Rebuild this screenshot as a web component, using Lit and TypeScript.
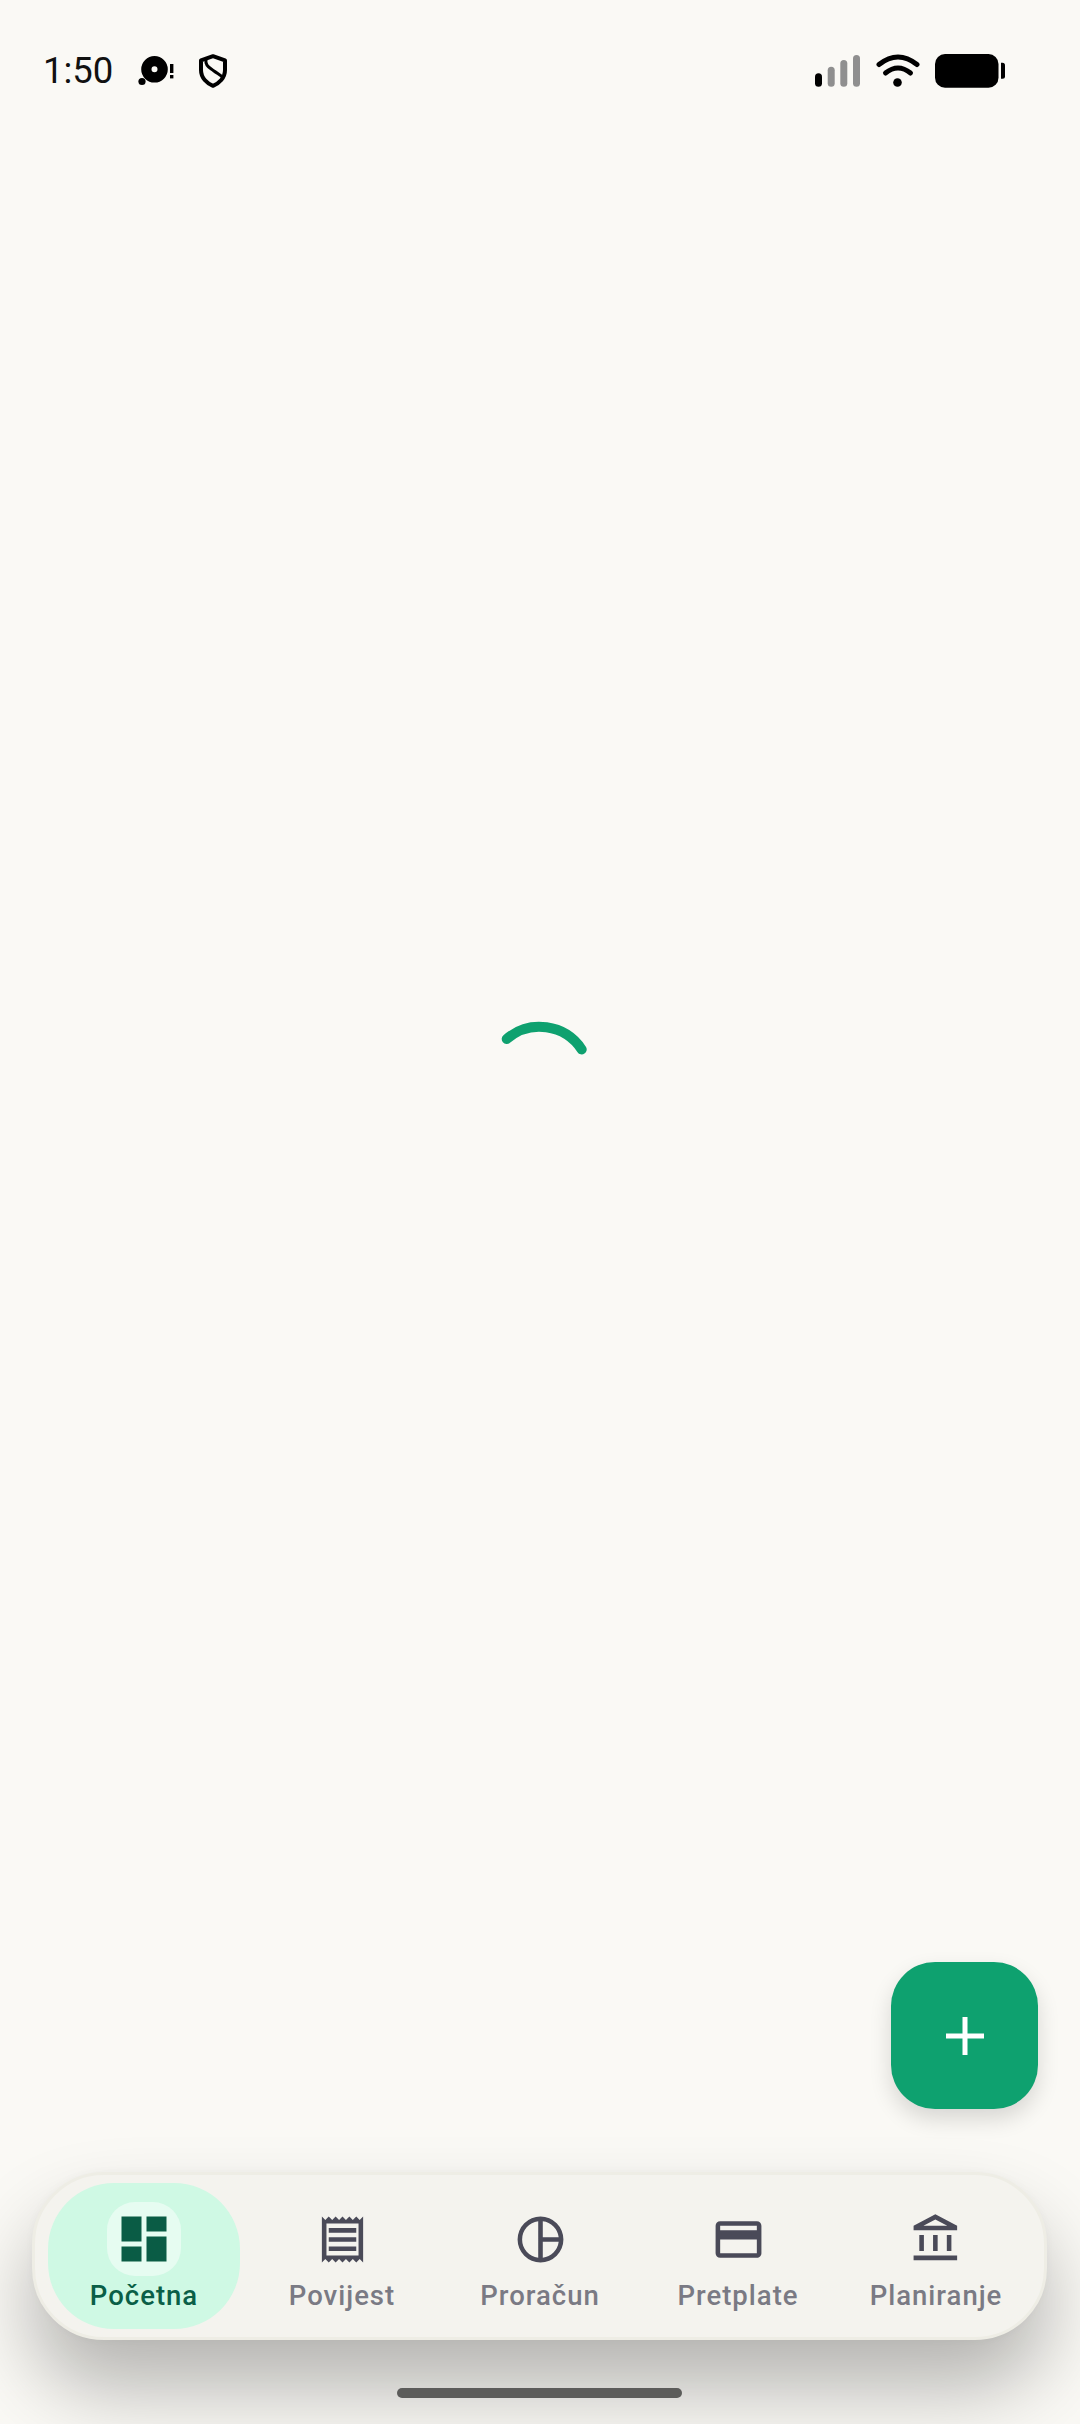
import { LitElement, html, css, svg } from 'lit';
import { customElement } from 'lit/decorators.js';
import { classMap } from 'lit/directives/class-map.js';

const tabs = [
  {
    label: 'Početna',
    active: true,
    icon: svg`<path d="M3 13h8V3H3v10zm0 8h8v-6H3v6zm10 0h8V11h-8v10zm0-18v6h8V3h-8z"/>`,
  },
  {
    label: 'Povijest',
    icon: svg`<path d="M19.5 3.5 18 2l-1.5 1.5L15 2l-1.5 1.5L12 2l-1.5 1.5L9 2 7.5 3.5 6 2 4.5 3.5 3 2v20l1.5-1.5L6 22l1.5-1.5L9 22l1.5-1.5L12 22l1.5-1.5L15 22l1.5-1.5L18 22l1.5-1.5L21 22V2l-1.5 1.5zM19 19H5V5h14v14zM6 15h12v2H6zm0-4h12v2H6zm0-4h12v2H6z"/>`,
  },
  {
    label: 'Proračun',
    icon: svg`<path d="M12 2a10 10 0 1 0 0 20 10 10 0 0 0 0-20zm-1 2.06V19.94A8 8 0 0 1 11 4.06zm2 0A8 8 0 0 1 19.94 11H13V4.06zM13 19.94V13h6.94A8 8 0 0 1 13 19.94z"/>`,
  },
  {
    label: 'Pretplate',
    icon: svg`<path d="M20 4H4c-1.11 0-1.99.89-1.99 2L2 18c0 1.11.89 2 2 2h16c1.11 0 2-.89 2-2V6c0-1.11-.89-2-2-2zm0 14H4v-6h16v6zm0-10H4V6h16v2z"/>`,
  },
  {
    label: 'Planiranje',
    icon: svg`<path d="M6.5 10h-2v7h2v-7zm6 0h-2v7h2v-7zm8.5 9H2v2h19v-2zm-2.5-9h-2v7h2v-7zm-7-6.74L16.71 6H6.29l5.21-2.74m0-2.26L2 6v2h19V6l-9.5-5z"/>`,
  },
];

@customElement('app-root')
export class AppRoot extends LitElement {
  static styles = css`
    :host {
      display: flex;
      flex-direction: column;
      position: relative;
      height: 2424px;
      overflow: hidden;
      background: #faf9f5;
      font-family: Roboto, sans-serif;
    }

    .status {
      display: flex;
      align-items: center;
      height: 140px;
      box-sizing: border-box;
      padding: 2px 75px 0 43px;
      color: #000;
    }
    .time {
      font-size: 36.5px;
      line-height: 44px;
      color: #111;
      margin-right: 24px;
    }
    .status svg {
      display: block;
      flex: none;
    }
    .disc {
      width: 40px;
      height: 34px;
      margin-right: 22px;
    }
    .shield {
      width: 28px;
      height: 34px;
    }
    .spacer {
      flex: 1;
    }
    .signal {
      width: 45px;
      height: 34px;
      margin-right: 16px;
    }
    .wifi {
      width: 44px;
      height: 34px;
      margin-right: 15px;
    }
    .battery {
      width: 70px;
      height: 34px;
    }

    main {
      flex: 1;
      display: flex;
      align-items: center;
      justify-content: center;
      padding-bottom: 160px;
    }
    .spinner {
      width: 110px;
      height: 110px;
      fill: none;
      stroke: #0ea16f;
      stroke-width: 10;
      stroke-linecap: round;
    }

    .fab {
      position: absolute;
      right: 42px;
      bottom: 315px;
      width: 147px;
      height: 147px;
      border-radius: 44px;
      background: #0ea16f;
      box-shadow: 0 10px 22px rgba(0, 0, 0, 0.14);
      display: flex;
      align-items: center;
      justify-content: center;
    }
    .fab svg {
      width: 38px;
      height: 38px;
      stroke: #fff;
      stroke-width: 5;
    }

    nav {
      display: flex;
      gap: 6px;
      box-sizing: border-box;
      height: 168px;
      margin: 0 33px 84px 32px;
      padding: 8px 12px 8px 13px;
      border: 3px solid #eeede5;
      border-radius: 72px;
      background: #f4f3ee;
      box-shadow: 0 48px 80px rgba(0, 0, 0, 0.28), 0 0 10px rgba(0, 0, 0, 0.03);
    }
    .tab {
      flex: 1;
      display: flex;
      flex-direction: column;
      align-items: center;
      padding-top: 19px;
      border-radius: 66px;
      color: #7a7a84;
    }
    .tab.active {
      background: #cff9e4;
      color: #0a5f47;
    }
    .glyph {
      width: 74px;
      height: 74px;
      border-radius: 28px;
      display: flex;
      align-items: center;
      justify-content: center;
    }
    .active .glyph {
      background: #e6fcf1;
    }
    .glyph svg {
      width: 55px;
      height: 55px;
      fill: #4a4a58;
    }
    .active .glyph svg {
      width: 60px;
      height: 60px;
      fill: #0a5c45;
    }
    .label {
      margin-top: 4px;
      font-size: 27.5px;
      font-weight: 500;
      letter-spacing: 1px;
      line-height: 32px;
      white-space: nowrap;
    }

    .home {
      position: absolute;
      left: 397px;
      bottom: 26px;
      width: 285px;
      height: 10px;
      border-radius: 5px;
      background: #5c5c5a;
    }
  `;

  renderStatus() {
    return html`
      <div class="status">
        <span class="time">1:50</span>
        <svg class="disc" viewBox="0 0 40 34">
          <path fill-rule="evenodd" d="M17.5 2a13.3 13.3 0 1 1 0 26.6 13.3 13.3 0 0 1 0-26.6zm0 10.3a3 3 0 1 0 0 6 3 3 0 0 0 0-6z"/>
          <circle cx="5" cy="27.5" r="3.6"/>
          <rect x="33" y="10" width="3.4" height="9"/>
          <rect x="33" y="21" width="3.4" height="3.4"/>
        </svg>
        <svg class="shield" viewBox="0 0 28 34" fill="none" stroke="#000" stroke-width="4" stroke-linejoin="round">
          <path d="M14 2.200 26 6.400V16c0 8-6 13.500-12 15.800C8 29.500 2 24 2 16V6.400z"/>
          <path stroke-width="3" d="M7 5C6 12 10 13 15 17c4 3 7 4 9 7"/>
        </svg>
        <span class="spacer"></span>
        <svg class="signal" viewBox="0 0 45 34">
          <rect x="0" y="19.300" width="7" height="13.400" rx="3.500"/>
          <rect x="12.700" y="12.700" width="7" height="20" rx="3.500" fill="#8f8f8f"/>
          <rect x="25.300" y="6" width="7" height="26.700" rx="3.500" fill="#8f8f8f"/>
          <rect x="38" y="1" width="7" height="31.700" rx="3.500" fill="#8f8f8f"/>
        </svg>
        <svg class="wifi" viewBox="0 0 44 34" fill="none" stroke="#000" stroke-width="5" stroke-linecap="round">
          <path d="M3 10.500Q22-4.500 41 10.500"/>
          <path d="M9.500 19Q22 9 34.500 19"/>
          <circle cx="21.500" cy="28.500" r="4.300" fill="#000" stroke="none"/>
        </svg>
        <svg class="battery" viewBox="0 0 70 34">
          <rect x="0" y="0" width="63.500" height="33.700" rx="10"/>
          <path d="M66 8.700h1.500a2.500 2.500 0 0 1 2.500 2.500v11a2.500 2.500 0 0 1-2.500 2.500H66z"/>
        </svg>
      </div>
    `;
  }

  render() {
    return html`
      ${this.renderStatus()}
      <main>
        <svg class="spinner" viewBox="0 0 110 110">
          <path d="M21.700 18A50.500 50.500 0 0 1 96.700 28.400"/>
        </svg>
      </main>
      <div class="fab">
        <svg viewBox="0 0 38 38"><path d="M19 0v38M0 19h38"/></svg>
      </div>
      <nav>
        ${tabs.map(
          (t) => html`
            <div class=${classMap({ tab: true, active: !!t.active })}>
              <span class="glyph"><svg viewBox="0 0 24 24">${t.icon}</svg></span>
              <span class="label">${t.label}</span>
            </div>
          `
        )}
      </nav>
      <div class="home"></div>
    `;
  }
}
